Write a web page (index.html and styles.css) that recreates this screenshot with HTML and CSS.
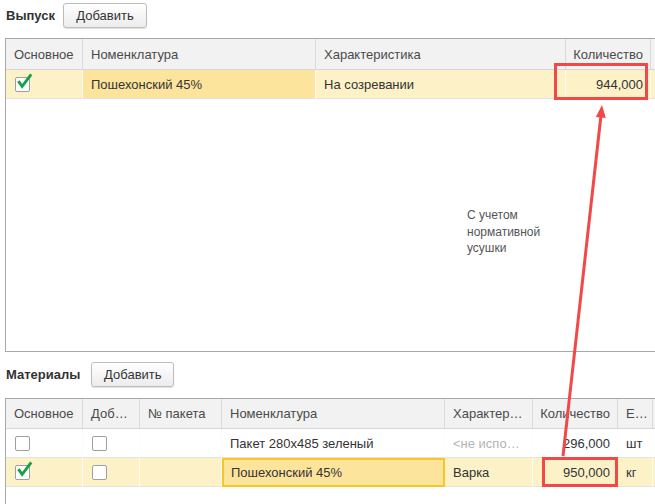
FILE: index.html
```html
<!DOCTYPE html>
<html lang="ru">
<head>
<meta charset="utf-8">
<link rel="stylesheet" href="styles.css">
</head>
<body>
<div class="page">
  <div class="toolbar tb1">
    <span class="label">Выпуск</span>
    <button class="btn">Добавить</button>
  </div>
  <div class="grid tbl1">
    <div class="hc">Основное</div>
    <div class="hc">Номенклатура</div>
    <div class="hc">Характеристика</div>
    <div class="hc right">Количество</div>
    <div class="hc"></div>

    <div class="dc sel"><span class="cb"><svg class="chk" viewBox="0 0 20 20"><path d="M2.5 7.5 L6.5 13 L16 0.5" /></svg></span></div>
    <div class="dc sel cur">Пошехонский 45%</div>
    <div class="dc sel">На созревании</div>
    <div class="dc sel right">944,000</div>
    <div class="dc sel"></div>
  </div>

  <div class="toolbar tb2">
    <span class="label">Материалы</span>
    <button class="btn">Добавить</button>
  </div>
  <div class="grid tbl2">
    <div class="hc">Основное</div>
    <div class="hc">Доб…</div>
    <div class="hc">№ пакета</div>
    <div class="hc">Номенклатура</div>
    <div class="hc">Характер…</div>
    <div class="hc right">Количество</div>
    <div class="hc">Е…</div>
    <div class="hc"></div>

    <div class="dc"><span class="cb"></span></div>
    <div class="dc"><span class="cb"></span></div>
    <div class="dc"></div>
    <div class="dc">Пакет 280х485 зеленый</div>
    <div class="dc muted">&lt;не испо…</div>
    <div class="dc right">296,000</div>
    <div class="dc">шт</div>
    <div class="dc"></div>

    <div class="dc sel"><span class="cb"><svg class="chk" viewBox="0 0 20 20"><path d="M2.5 7.5 L6.5 13 L16 0.5" /></svg></span></div>
    <div class="dc sel"><span class="cb"></span></div>
    <div class="dc sel"></div>
    <div class="dc sel cur focus">Пошехонский 45%</div>
    <div class="dc sel">Варка</div>
    <div class="dc sel right">950,000</div>
    <div class="dc sel">кг</div>
    <div class="dc sel"></div>
  </div>

  <div class="note">С учетом<br>нормативной<br>усушки</div>
  <div class="redbox box1"></div>
  <div class="redbox box2"></div>
  <svg class="arrow" width="655" height="504" viewBox="0 0 655 504">
    <line x1="563" y1="456" x2="600.9" y2="116" stroke="#f24848" stroke-width="3"/>
    <polygon points="602,105 605.8,118 595.8,117" fill="#f24848"/>
  </svg>
</div>
</body>
</html>
```

FILE: styles.css
```css
* { box-sizing: border-box; }
html, body { margin: 0; padding: 0; }
body {
  width: 655px;
  height: 504px;
  overflow: hidden;
  background: #fff;
  font-family: "Liberation Sans", Arial, sans-serif;
  font-size: 13px;
  color: #333;
}
.page {
  position: relative;
  padding: 3px 0 0 5px;
  height: 504px;
  overflow: hidden;
}
.toolbar {
  display: flex;
  align-items: center;
  height: 25px;
}
.tb1 { gap: 8px; }
.tb2 { gap: 11px; margin-top: 10px; }
.label {
  font-weight: bold;
  color: #333;
  padding-left: 1px;
}
.btn {
  height: 25px;
  padding: 0;
  font-family: "Liberation Sans", Arial, sans-serif;
  font-size: 13px;
  color: #333;
  background: linear-gradient(#ffffff, #ececec);
  border: 1px solid #bdbdbd;
  border-radius: 3px;
  box-shadow: 0 1px 1px rgba(0,0,0,0.12);
}
.tb1 .btn { width: 84px; }
.tb2 .btn { width: 83px; }

.grid {
  display: grid;
  border: 1px solid #a9a9a9;
  border-right: none;
  width: 650px;
  align-content: start;
}
.tbl1 {
  margin-top: 10px;
  height: 314px;
  grid-template-columns: 77px 233px 250px 85px minmax(0, 1fr);
  grid-template-rows: 31px 29px;
}
.tbl2 {
  margin-top: 11px;
  height: 160px;
  grid-template-columns: 77px 57px 82px 223px 88px 85px 35px minmax(0, 1fr);
  grid-template-rows: 30px 29px 29px;
}
.hc {
  background: #f2f2f2;
  color: #4a4a4a;
  border-right: 1px solid #dadada;
  border-bottom: 1px solid #d6d6d6;
  display: flex;
  align-items: center;
  padding: 0 8px;
  white-space: nowrap;
  overflow: hidden;
}
.dc {
  border-right: 1px solid #fbfbf7;
  border-bottom: 1px solid #e3e3e3;
  display: flex;
  align-items: center;
  padding: 0 8px;
  white-space: nowrap;
  overflow: hidden;
  color: #333;
}
.right { justify-content: flex-end; padding-right: 7px; }
.sel { background: #fdf1c8; }
.cur { background: #fde49d; }
.focus {
  border: 2px solid #f6c624;
  padding-left: 7px;
}
.muted { color: #b4b4b4; }

.cb {
  position: relative;
  display: inline-block;
  width: 15px;
  height: 15px;
  border: 1px solid #9f9f9f;
  border-radius: 2px;
  background: #fff;
  margin-left: 1px;
}
.chk {
  position: absolute;
  left: 0;
  top: -4px;
  width: 19px;
  height: 19px;
  overflow: visible;
}
.chk path {
  fill: none;
  stroke: #17a04a;
  stroke-width: 3;
}

.note {
  position: absolute;
  left: 467px;
  top: 207px;
  font-size: 12px;
  line-height: 16.5px;
  color: #555;
}
.redbox {
  position: absolute;
  border: 3px solid #f24848;
}
.box1 { left: 554px; top: 63px; width: 94px; height: 37px; }
.box2 { left: 542px; top: 457px; width: 76px; height: 30px; }
.arrow {
  position: absolute;
  left: 0;
  top: 0;
  pointer-events: none;
}
```
